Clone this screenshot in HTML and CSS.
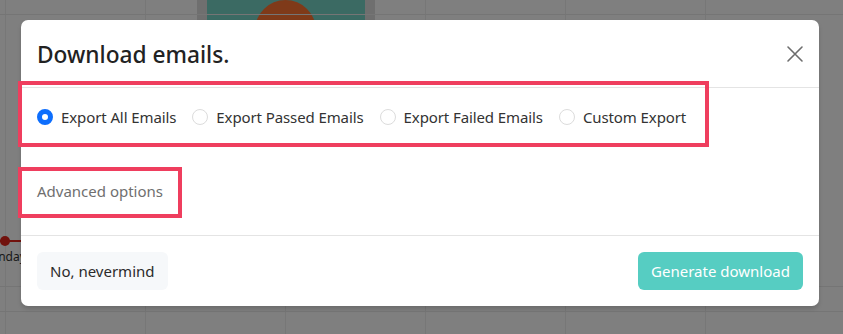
FILE: index.html
```html
<!DOCTYPE html>
<html>
<head>
<meta charset="utf-8">
<link rel="stylesheet" href="styles.css">
</head>
<body>
<div class="backdrop-page">
  <div class="bg-card"><div class="bg-card-inner"><div class="bg-sun"></div></div></div>
  <div class="bg-series"><span class="bg-dot"></span><span class="bg-label">Monday</span></div>
  <div class="bg-hline bg-hline-0"></div>
  <div class="bg-hline bg-hline-1"></div>
  <div class="bg-hline bg-hline-2"></div>
</div>
<div class="overlay">
  <div class="modal">
    <div class="modal-header">
      <h5 class="modal-title">Download emails.</h5>
      <button class="close-btn" aria-label="Close">
        <svg width="18" height="18" viewBox="0 0 18 18"><path d="M2 2 L16 16 M16 2 L2 16" stroke="#6d6d6d" stroke-width="1.6" fill="none" stroke-linecap="round"/></svg>
      </button>
    </div>
    <div class="modal-body">
      <div class="radio-row">
        <label class="radio"><span class="radio-dot checked"></span>Export All Emails</label>
        <label class="radio"><span class="radio-dot"></span>Export Passed Emails</label>
        <label class="radio"><span class="radio-dot"></span>Export Failed Emails</label>
        <label class="radio"><span class="radio-dot"></span>Custom Export</label>
      </div>
      <div class="advanced">Advanced options</div>
    </div>
    <div class="modal-footer">
      <button class="btn btn-light">No, nevermind</button>
      <button class="btn btn-teal">Generate download</button>
    </div>
    <div class="annot annot-radios"></div>
    <div class="annot annot-advanced"></div>
  </div>
</div>
</body>
</html>
```
FILE: styles.css
```css
* { box-sizing: border-box; }
html, body { margin: 0; padding: 0; }
body {
  width: 843px;
  height: 334px;
  overflow: hidden;
  position: relative;
  font-family: "Noto Sans", "Open Sans", sans-serif;
  background-color: #fff;
  background-image:
    linear-gradient(to right, #eeeeee 1px, transparent 1px);
  background-size: 140px 100%;
  background-position: 5px 0;
}
.backdrop-page { position: absolute; inset: 0; }
.bg-card {
  position: absolute;
  left: 197px; top: -40px;
  width: 178px; height: 70px;
  background: #dedede;
  border-radius: 10px;
  padding: 0 10px;
}
.bg-card-inner {
  height: 100%;
  background: #76d4c6;
  position: relative;
  overflow: hidden;
}
.bg-sun {
  position: absolute;
  left: 48px; top: 40px;
  width: 61px; height: 61px;
  border-radius: 50%;
  background: #ff7433;
}
.bg-series { position: absolute; left: -20px; top: 236px; width: 60px; }
.bg-series::before {
  content: ""; position: absolute; left: 0; top: 4px; width: 60px; height: 2px; background: #e3241a;
}
.bg-dot {
  position: absolute; left: 20px; top: 0; width: 10px; height: 10px; border-radius: 50%; background: #e3241a;
}
.bg-label {
  position: absolute; left: 0; top: 12px; font-size: 12px; color: #333; font-family: "Noto Sans", sans-serif;
}
.bg-hline { position: absolute; left: 0; right: 0; height: 1px; background: #eaeaea; }
.bg-hline-0 { top: 14px; }
.bg-hline-1 { top: 286px; }
.bg-hline-2 { top: 311px; }

.overlay {
  position: absolute; inset: 0;
  background: rgba(0,0,0,0.5);
  padding: 20px 0 0 21px;
}
.modal {
  position: relative;
  width: 798px;
  height: 286px;
  background: #fff;
  border-radius: 7px;
  box-shadow: 0 3px 4px rgba(0,0,0,0.15);
  display: flex;
  flex-direction: column;
}
.modal-header {
  display: flex;
  align-items: center;
  justify-content: space-between;
  height: 68px;
  padding: 0 14px 0 16px;
  border-bottom: 1px solid #e4e4e4;
}
.modal-title {
  margin: 0;
  font-size: 22.7px;
  font-weight: 500;
  color: #222;
  line-height: 1;
  padding-top: 4px;
}
.close-btn {
  border: 0; background: none; padding: 0; width: 20px; height: 20px;
  display: flex; align-items: center; justify-content: center;
  margin-top: 1px;
}
.modal-body {
  height: 147px;
  padding: 17px 16px 0 16px;
}
.radio-row {
  display: flex;
  gap: 16px;
  height: 24px;
  align-items: center;
}
.radio {
  display: flex;
  align-items: center;
  gap: 8px;
  font-size: 15px;
  letter-spacing: -0.1px;
  color: #333;
  white-space: nowrap;
}
.radio-dot {
  width: 16px; height: 16px;
  border-radius: 50%;
  border: 1px solid #dcdcdc;
  background: #fff;
  flex: none;
}
.radio-dot.checked {
  border: 5px solid #0d6efd;
  background: #fff;
}
.advanced {
  margin-top: 50px;
  font-size: 15px;
  color: #6f6f6f;
  line-height: 24px;
}
.modal-footer {
  flex: 1;
  border-top: 1px solid #e4e4e4;
  display: flex;
  align-items: center;
  justify-content: space-between;
  padding: 0 16px;
}
.btn {
  font-family: inherit;
  font-size: 15px;
  height: 38px;
  border: 0;
  border-radius: 6px;
  padding: 0 13px;
}
.btn-light { background: #f6f8fa; color: #2b2b2b; }
.btn-teal { background: #56cdc2; color: #fff; width: 165px; }
.annot {
  position: absolute;
  border: 4px solid #ef3e5e;
  pointer-events: none;
}
.annot-radios { left: -3px; top: 61px; width: 691px; height: 66px; }
.annot-advanced { left: -3px; top: 147px; width: 164px; height: 51px; }
```
